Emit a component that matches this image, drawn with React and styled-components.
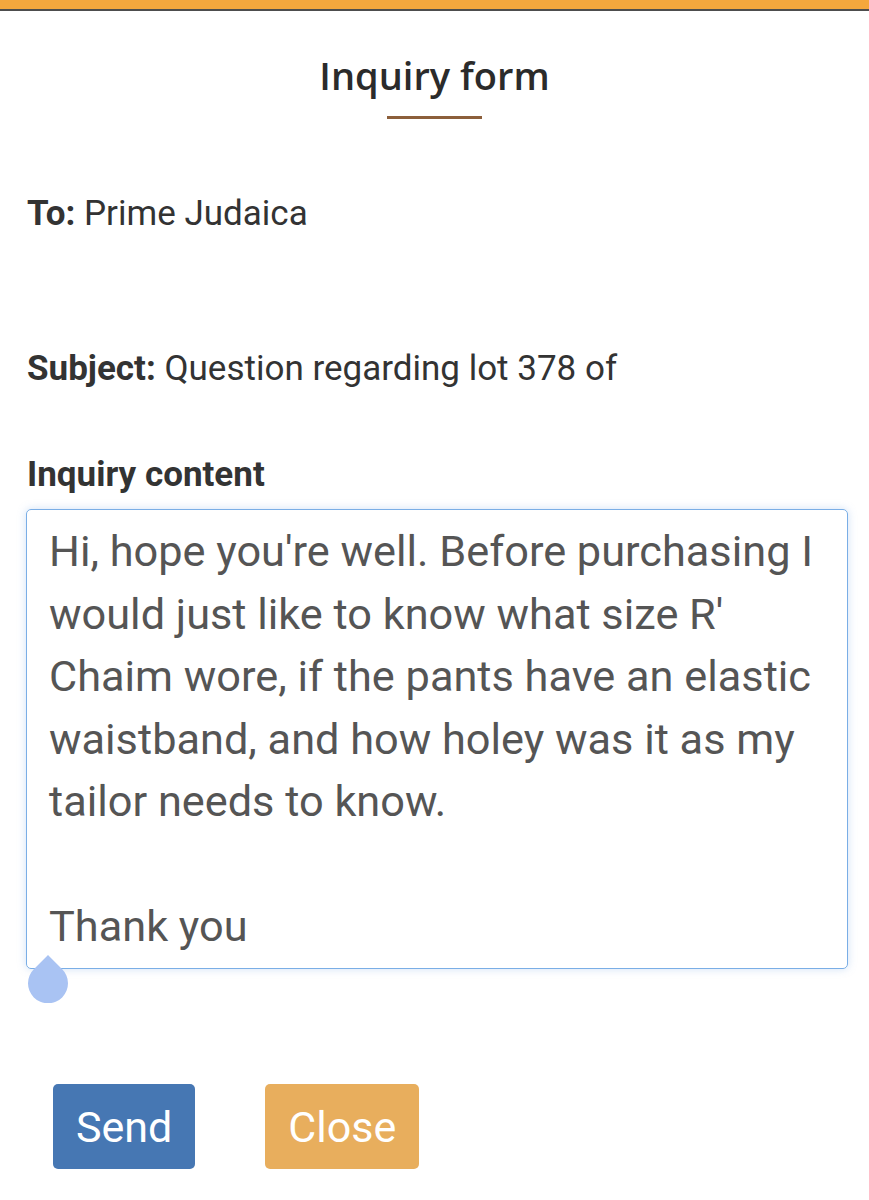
import React from "react";
import styled, { createGlobalStyle } from "styled-components";

const GlobalStyle = createGlobalStyle`
  body {
    margin: 0;
    background: #fff;
    font-family: Roboto, "Liberation Sans", sans-serif;
    color: #333;
  }
`;

const Page = styled.div`
  width: 869px;
  min-height: 1200px;
  display: flex;
  flex-direction: column;
`;

const TopBar = styled.div`
  height: 9px;
  background: #f4a73d;
  border-bottom: 2px solid #4d4d4d;
`;

const Header = styled.div`
  display: flex;
  flex-direction: column;
  align-items: center;
  padding-top: 40px;
`;

const Title = styled.h1`
  margin: 0;
  font-family: "Open Sans", sans-serif;
  font-weight: 600;
  font-size: 38px;
  line-height: 48px;
  color: #2b2b2b;
`;

const TitleRule = styled.div`
  width: 95px;
  height: 3px;
  margin-top: 17px;
  background: #8c5f3b;
`;

const Body = styled.div`
  padding: 0 22px 0 27px;
  display: flex;
  flex-direction: column;
`;

const Field = styled.div`
  font-size: 35px;
  line-height: 44px;
  margin-top: ${(p) => p.$top}px;
  color: #333;
  b {
    font-weight: 700;
  }
`;

const Label = styled.div`
  font-size: 35px;
  font-weight: 700;
  line-height: 44px;
  margin-top: 62px;
  margin-bottom: 12px;
`;

const TextWrap = styled.div`
  position: relative;
  margin-left: -1px;
`;

const TextBox = styled.div`
  box-sizing: border-box;
  width: 822px;
  height: 460px;
  border: 1px solid #7aaee6;
  border-radius: 5px;
  box-shadow: 0 0 8px rgba(120, 170, 230, 0.35);
  padding: 11px 22px;
  font-size: 43.3px;
  line-height: 62.5px;
  color: #555;
  white-space: pre;
`;

const Handle = styled.svg`
  position: absolute;
  left: 0;
  bottom: -34px;
`;

const Actions = styled.div`
  display: flex;
  gap: 70px;
  padding-left: 53px;
  margin-top: 115px;
`;

const Button = styled.button`
  height: 85px;
  padding: 0 23px;
  border: none;
  border-radius: 5px;
  background: ${(p) => p.$bg};
  color: #fff;
  font-family: Roboto, sans-serif;
  font-size: 43px;
  cursor: pointer;
`;

const message = `Hi, hope you're well. Before purchasing I
would just like to know what size R'
Chaim wore, if the pants have an elastic
waistband, and how holey was it as my
tailor needs to know.

Thank you`;

export default function App() {
  return (
    <Page>
      <GlobalStyle />
      <TopBar />
      <Header>
        <Title>Inquiry form</Title>
        <TitleRule />
      </Header>
      <Body>
        <Field $top={73}>
          <b>To:</b> Prime Judaica
        </Field>
        <Field $top={111}>
          <b>Subject:</b> Question regarding lot 378 of
        </Field>
        <Label>Inquiry content</Label>
        <TextWrap>
          <TextBox>{message}</TextBox>
          <Handle width="44" height="50" viewBox="0 0 44 50">
            <path d="M22 2 L36 16 A20 20 0 1 1 8 16 Z" fill="#a9c3f3" />
          </Handle>
        </TextWrap>
      </Body>
      <Actions>
        <Button $bg="#4677b3">Send</Button>
        <Button $bg="#e8ae5d">Close</Button>
      </Actions>
    </Page>
  );
}
